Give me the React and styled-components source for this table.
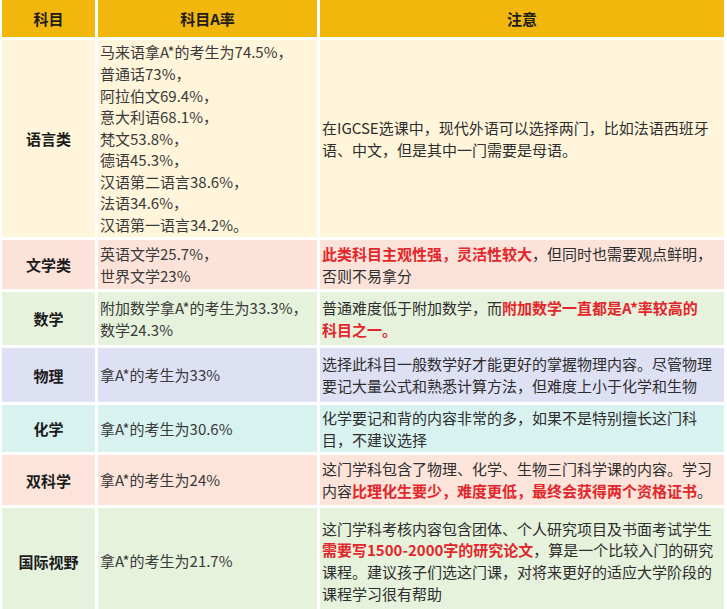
import React from "react";
import styled, { createGlobalStyle } from "styled-components";

const GlobalStyle = createGlobalStyle`
    html, body {
        margin: 0;
        padding: 0;
        background: #fff;
        overflow: hidden;
    }
    body {
        font-family: "Noto Sans CJK SC", "Noto Sans", sans-serif;
    }
`;

const rows = [
    {
        label: "语言类",
        bg: "#fff5da",
        height: 197,
        rate: [
            "马来语拿A*的考生为74.5%，",
            "普通话73%，",
            "阿拉伯文69.4%，",
            "意大利语68.1%，",
            "梵文53.8%，",
            "德语45.3%，",
            "汉语第二语言38.6%，",
            "法语34.6%，",
            "汉语第一语言34.2%。",
        ],
        note: [
            [["在IGCSE选课中，现代外语可以选择两门，比如法语西班牙"]],
            [["语、中文，但是其中一门需要是母语。"]],
        ],
    },
    {
        label: "文学类",
        bg: "#fce3d9",
        height: 49,
        rate: ["英语文学25.7%，", "世界文学23%"],
        note: [
            [["此类科目主观性强，灵活性较大", true], ["，但同时也需要观点鲜明，"]],
            [["否则不易拿分"]],
        ],
    },
    {
        label: "数学",
        bg: "#e6f2dc",
        height: 53,
        rate: ["附加数学拿A*的考生为33.3%，", "数学24.3%"],
        note: [
            [["普通难度低于附加数学，而"], ["附加数学一直都是A*率较高的", true]],
            [["科目之一。", true]],
        ],
    },
    {
        label: "物理",
        bg: "#dee0f4",
        height: 54,
        rate: ["拿A*的考生为33%"],
        note: [
            [["选择此科目一般数学好才能更好的掌握物理内容。尽管物理"]],
            [["要记大量公式和熟悉计算方法，但难度上小于化学和生物"]],
        ],
    },
    {
        label: "化学",
        bg: "#d8f2f0",
        height: 47,
        rate: ["拿A*的考生为30.6%"],
        note: [
            [["化学要记和背的内容非常的多，如果不是特别擅长这门科"]],
            [["目，不建议选择"]],
        ],
    },
    {
        label: "双科学",
        bg: "#fce4da",
        height: 50,
        rate: ["拿A*的考生为24%"],
        note: [
            [["这门学科包含了物理、化学、生物三门科学课的内容。学习"]],
            [["内容"], ["比理化生要少，难度更低，最终会获得两个资格证书", true], ["。"]],
        ],
    },
    {
        label: "国际视野",
        bg: "#e6f2dc",
        height: 106,
        rate: ["拿A*的考生为21.7%"],
        note: [
            [["这门学科考核内容包含团体、个人研究项目及书面考试学生"]],
            [["需要写1500-2000字的研究论文", true], ["，算是一个比较入门的研究"]],
            [["课程。建议孩子们选这门课，对将来更好的适应大学阶段的"]],
            [["课程学习很有帮助"]],
        ],
    },
];

const App = () => {
    return (
        <>
            <GlobalStyle />
            <Table>
                <Row $height={37}>
                    <HeadCell>科目</HeadCell>
                    <HeadCell>科目A率</HeadCell>
                    <HeadCell>注意</HeadCell>
                </Row>
                {rows.map((row) => (
                    <Row key={row.label} $height={row.height}>
                        <LabelCell $bg={row.bg}>{row.label}</LabelCell>
                        <RateCell $bg={row.bg}>
                            {row.rate.map((line) => (
                                <Line key={line}>{line}</Line>
                            ))}
                        </RateCell>
                        <NoteCell $bg={row.bg}>
                            {row.note.map((line, i) => (
                                <Line key={i}>
                                    {line.map(([text, red], j) =>
                                        red ? <Strong key={j}>{text}</Strong> : <span key={j}>{text}</span>
                                    )}
                                </Line>
                            ))}
                        </NoteCell>
                    </Row>
                ))}
            </Table>
        </>
    );
};

export default App;

const Table = styled.div`
    display: flex;
    flex-direction: column;
    gap: 3px;
    padding-left: 2px;
    width: 724px;
`;
const Row = styled.div`
    display: grid;
    grid-template-columns: 93px 219px 404px;
    column-gap: 3px;
    min-height: ${(p) => p.$height}px;
`;
const HeadCell = styled.div`
    background: #f1b70c;
    display: flex;
    align-items: center;
    justify-content: center;
    font-size: 15px;
    font-weight: 700;
    color: #1c1c1c;
`;
const LabelCell = styled.div`
    background: ${(p) => p.$bg};
    display: flex;
    align-items: center;
    justify-content: center;
    font-size: 15px;
    font-weight: 700;
    color: #1c1c1c;
`;
const RateCell = styled.div`
    background: ${(p) => p.$bg};
    display: flex;
    flex-direction: column;
    justify-content: center;
    padding: 1px 2px;
    font-size: 15px;
    line-height: 21.6px;
    color: #3a3a3a;
`;
const NoteCell = styled.div`
    background: ${(p) => p.$bg};
    display: flex;
    flex-direction: column;
    justify-content: center;
    padding: 1px 2px;
    font-size: 15px;
    line-height: 21.6px;
    color: #2e2e2e;
`;
const Line = styled.div`
    white-space: nowrap;
`;
const Strong = styled.span`
    color: #e2262b;
    font-weight: 700;
`;
